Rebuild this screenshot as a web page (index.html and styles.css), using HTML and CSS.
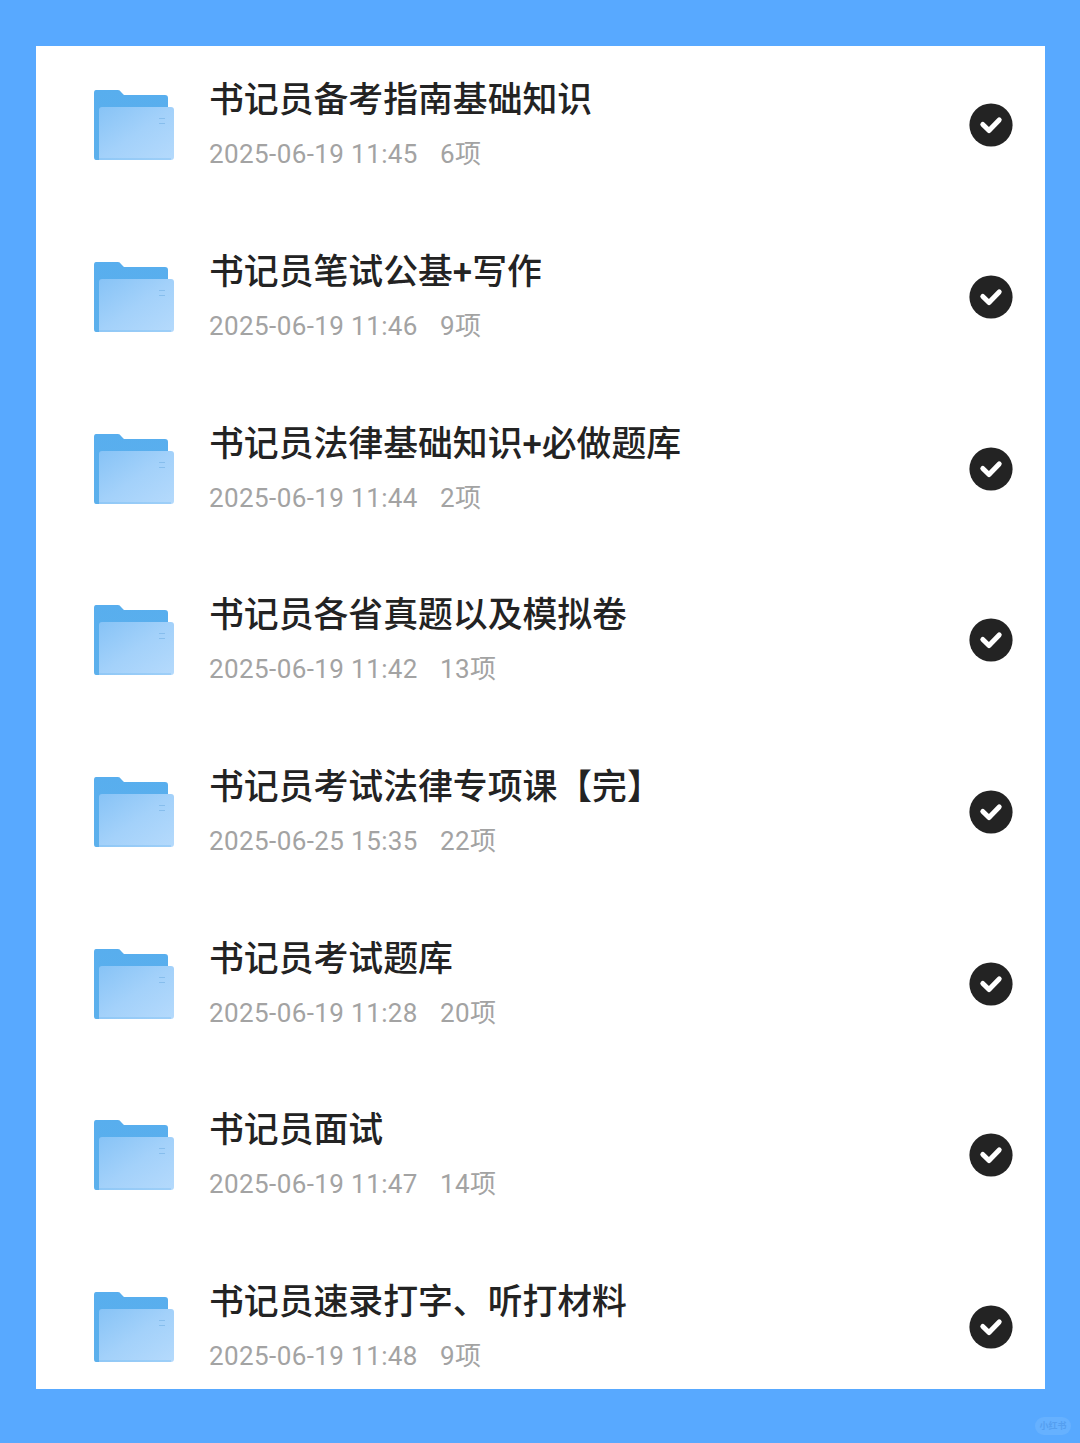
FILE: index.html
```
<!DOCTYPE html>
<html lang="zh-CN">
<head>
	<meta charset="utf-8">
	<title>书记员</title>
	<link rel="stylesheet" href="styles.css">
</head>
<body>
<!-- shared icons -->
<svg class="defs" width="0" height="0">
	<defs>
		<linearGradient id="back" x1="0" y1="0" x2="0" y2="1">
			<stop offset="0" stop-color="#58aeee"/>
			<stop offset="1" stop-color="#5cb0ec"/>
		</linearGradient>
		<linearGradient id="front" x1="0" y1="0" x2="1" y2="1">
			<stop offset="0" stop-color="#87c3f6"/>
			<stop offset="0.5" stop-color="#a3d1fa"/>
			<stop offset="1" stop-color="#b5dafc"/>
		</linearGradient>
		<symbol id="folder" viewBox="0 0 82 72">
			<path fill="url(#back)" d="M3 1h22q2 0 3 2l3 3h41q3 0 3 3v62H3q-2 0-2-3V4q0-3 2-3z"/>
			<path fill="url(#front)" d="M9 18h69q3 0 3 3v47q0 3-3 3H6V21q0-3 3-3z"/>
			<path fill="none" stroke="#5cb0ec" stroke-width="1" opacity="0.5" d="M6 70h72"/>
			<path fill="none" stroke="#7fb9ea" stroke-width="1.2" opacity="0.8" d="M66 29.5h6M66 34.5h6"/>
		</symbol>
		<symbol id="check" viewBox="0 0 44 44">
			<circle cx="22" cy="22" r="21.6" fill="#232323"/>
			<path fill="none" stroke="#fff" stroke-width="5" stroke-linecap="round" stroke-linejoin="round" d="M13.8 21.5l6.2 6 10.2-10.6"/>
		</symbol>
	</defs>
</svg>
<div class="panel">
	<div class="row">
		<svg class="folder"><use href="#folder"/></svg>
		<div class="info">
			<div class="name">书记员备考指南基础知识</div>
			<div class="meta"><span>2025-06-19 11:45</span><span>6项</span></div>
		</div>
		<svg class="check"><use href="#check"/></svg>
	</div>
	<div class="row">
		<svg class="folder"><use href="#folder"/></svg>
		<div class="info">
			<div class="name">书记员笔试公基+写作</div>
			<div class="meta"><span>2025-06-19 11:46</span><span>9项</span></div>
		</div>
		<svg class="check"><use href="#check"/></svg>
	</div>
	<div class="row">
		<svg class="folder"><use href="#folder"/></svg>
		<div class="info">
			<div class="name">书记员法律基础知识+必做题库</div>
			<div class="meta"><span>2025-06-19 11:44</span><span>2项</span></div>
		</div>
		<svg class="check"><use href="#check"/></svg>
	</div>
	<div class="row">
		<svg class="folder"><use href="#folder"/></svg>
		<div class="info">
			<div class="name">书记员各省真题以及模拟卷</div>
			<div class="meta"><span>2025-06-19 11:42</span><span>13项</span></div>
		</div>
		<svg class="check"><use href="#check"/></svg>
	</div>
	<div class="row">
		<svg class="folder"><use href="#folder"/></svg>
		<div class="info">
			<div class="name">书记员考试法律专项课【完】</div>
			<div class="meta"><span>2025-06-25 15:35</span><span>22项</span></div>
		</div>
		<svg class="check"><use href="#check"/></svg>
	</div>
	<div class="row">
		<svg class="folder"><use href="#folder"/></svg>
		<div class="info">
			<div class="name">书记员考试题库</div>
			<div class="meta"><span>2025-06-19 11:28</span><span>20项</span></div>
		</div>
		<svg class="check"><use href="#check"/></svg>
	</div>
	<div class="row">
		<svg class="folder"><use href="#folder"/></svg>
		<div class="info">
			<div class="name">书记员面试</div>
			<div class="meta"><span>2025-06-19 11:47</span><span>14项</span></div>
		</div>
		<svg class="check"><use href="#check"/></svg>
	</div>
	<div class="row">
		<svg class="folder"><use href="#folder"/></svg>
		<div class="info">
			<div class="name">书记员速录打字、听打材料</div>
			<div class="meta"><span>2025-06-19 11:48</span><span>9项</span></div>
		</div>
		<svg class="check"><use href="#check"/></svg>
	</div>
</div>
<div class="badge">小红书</div>
</body>
</html>
```
FILE: styles.css
```
* {
	box-sizing: border-box;
}
body {
	margin: 0;
	height: 1443px;
	padding: 46px 35px 0 36px;
	background: #58a9ff;
	font-family: Roboto, "Noto Sans CJK SC", sans-serif;
	overflow: hidden;
}
.defs {
	position: absolute;
}
.panel {
	height: 1343px;
	padding: 24.3px 32px 0 57px;
	background: #fff;
	display: flex;
	flex-direction: column;
	gap: 61.7px;
}
.row {
	height: 110px;
	flex: none;
	display: flex;
	align-items: center;
}
.folder {
	width: 82px;
	height: 72px;
	flex: none;
}
.info {
	flex: 1;
	height: 110px;
	padding-top: 3px;
	margin-left: 34px;
	white-space: nowrap;
}
.name {
	height: 55px;
	line-height: 56px;
	font-size: 34.85px;
	font-weight: 500;
	color: #232323;
}
.meta {
	display: flex;
	gap: 22px;
	height: 52px;
	line-height: 52px;
	font-size: 26px;
	letter-spacing: 0.4px;
	color: #a3a3a3;
}
.check {
	width: 44px;
	height: 44px;
	flex: none;
}
.badge {
	width: 36px;
	height: 18px;
	margin: 28px -26px 0 auto;
	border-radius: 9px;
	background: #66b1ff;
	color: #559ff0;
	font-size: 9px;
	font-weight: 700;
	line-height: 18px;
	text-align: center;
}
```
